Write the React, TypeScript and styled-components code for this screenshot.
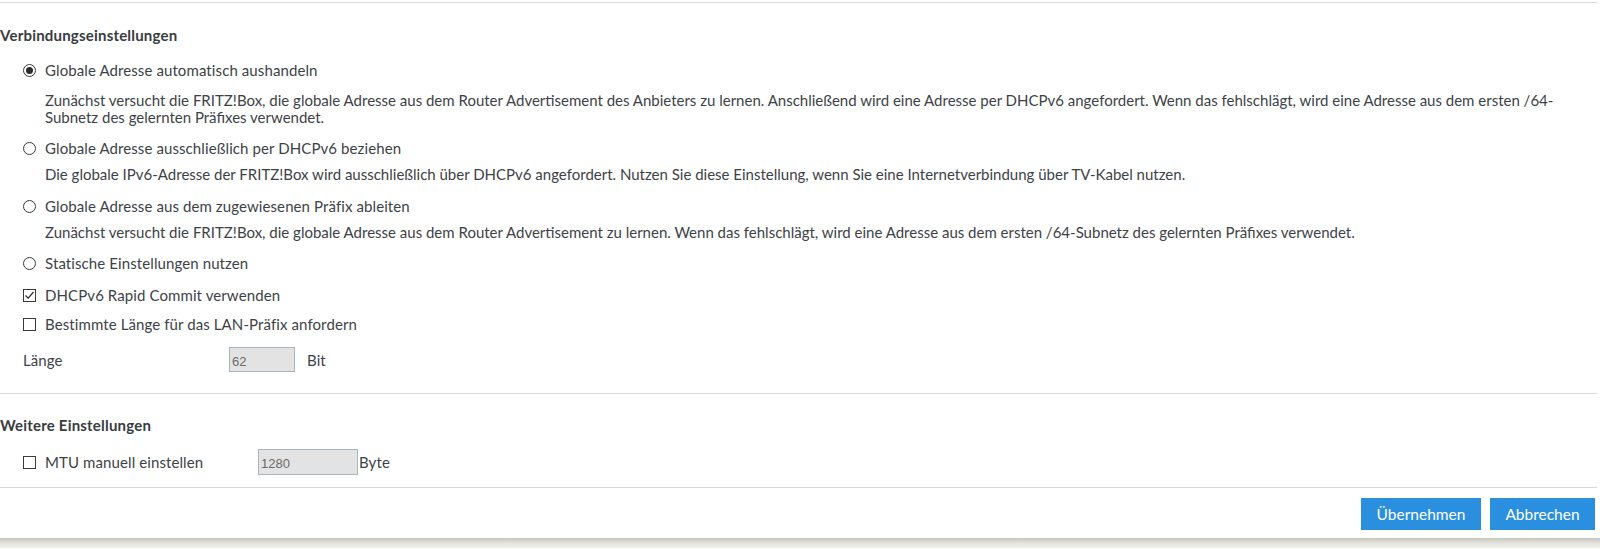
import React from "react";
import styled, { createGlobalStyle } from "styled-components";

const Global = createGlobalStyle`
  html, body { margin: 0; padding: 0; background: #ffffff; }
  body { font-family: Lato, "Noto Sans", sans-serif; color: #3d4247; }
  * { box-sizing: border-box; }
`;

const Page = styled.div`
  width: 1600px;
  padding-top: 2px;
`;

const Panel = styled.div`
  width: 1597px;
  background: #fff;
  border-top: 1px solid #dadada;
`;

const Section = styled.section<{ $top: number }>`
  padding: ${(p) => p.$top}px 20px 0 0;
  display: flex;
  flex-direction: column;
`;

const Heading = styled.h2`
  margin: 0;
  font-size: 15px;
  line-height: 20px;
  font-weight: 700;
  letter-spacing: 0.2px;
  color: #383c41;
`;

const Row = styled.label<{ $mt: number }>`
  display: flex;
  align-items: center;
  margin-top: ${(p) => p.$mt}px;
  padding-left: 23px;
  font-size: 15px;
  line-height: 20px;
  height: 20px;
  letter-spacing: 0.1px;
`;

const Desc = styled.p<{ $mt: number }>`
  margin: ${(p) => p.$mt}px 0 0 45px;
  font-size: 15px;
  line-height: 17px;
`;

const RadioMark = styled.span<{ $on?: boolean }>`
  width: 13px;
  height: 13px;
  border: 1px solid #3a3a3a;
  border-radius: 50%;
  display: inline-flex;
  align-items: center;
  justify-content: center;
  margin-right: 9px;
  flex: none;
  &::after {
    content: "";
    width: 7px;
    height: 7px;
    border-radius: 50%;
    background: ${(p) => (p.$on ? "#2b2b2b" : "transparent")};
  }
`;

const BoxMark = styled.span`
  width: 13px;
  height: 13px;
  border: 1px solid #3a3a3a;
  display: inline-flex;
  align-items: center;
  justify-content: center;
  margin-right: 9px;
  flex: none;
`;

const FieldRow = styled.div<{ $mt: number; $h: number }>`
  display: flex;
  align-items: center;
  margin-top: ${(p) => p.$mt}px;
  height: ${(p) => p.$h}px;
  padding-left: 23px;
  font-size: 15px;
  letter-spacing: 0.1px;
`;

const FieldLabel = styled.span<{ $w: number }>`
  width: ${(p) => p.$w}px;
  display: inline-flex;
  align-items: center;
  flex: none;
`;

const TextInput = styled.input<{ $w: number; $h: number }>`
  width: ${(p) => p.$w}px;
  height: ${(p) => p.$h}px;
  background: #e3e3e3;
  border: 1px solid #a9b5be;
  padding: 3px 0 0 2px;
  font-family: "Liberation Sans", Arial, sans-serif;
  font-size: 13px;
  color: #6a6a6a;
  outline: none;
  flex: none;
`;

const Unit = styled.span<{ $ml: number }>`
  margin-left: ${(p) => p.$ml}px;
`;

const Separator = styled.hr<{ $mt: number }>`
  border: 0;
  border-top: 1px solid #d9d9d9;
  margin: ${(p) => p.$mt}px 0 0;
  width: 100%;
`;

const Footer = styled.div`
  display: flex;
  justify-content: flex-end;
  gap: 9px;
  padding: 10px 2px 8px 0;
`;

const Button = styled.button<{ $w: number }>`
  width: ${(p) => p.$w}px;
  height: 32px;
  border: 0;
  background: #2a8fde;
  color: #fff;
  font-family: Lato, "Noto Sans", sans-serif;
  font-size: 15.5px;
  cursor: pointer;
`;

const Shadow = styled.div`
  height: 10px;
  background: linear-gradient(#c4c4bc, #e4e3dd 50%, #efeee9);
`;

const Check = () => (
  <svg width="11" height="11" viewBox="0 0 11 11">
    <polyline points="1.5,5.5 4.2,8.2 9.5,2" fill="none" stroke="#2b2b2b" strokeWidth="1.2" />
  </svg>
);

export default function App() {
  return (
    <Page>
      <Global />
      <Panel>
        <Section $top={22}>
          <Heading>Verbindungseinstellungen</Heading>
          <Row $mt={15}>
            <RadioMark $on />
            Globale Adresse automatisch aushandeln
          </Row>
          <Desc $mt={12}>
            Zunächst versucht die FRITZ!Box, die globale Adresse aus dem Router Advertisement des Anbieters zu lernen. Anschließend wird eine Adresse per DHCPv6 angefordert. Wenn das fehlschlägt, wird eine Adresse aus dem ersten /64-Subnetz des gelernten Präfixes verwendet.
          </Desc>
          <Row $mt={12}>
            <RadioMark />
            Globale Adresse ausschließlich per DHCPv6 beziehen
          </Row>
          <Desc $mt={8}>
            Die globale IPv6-Adresse der FRITZ!Box wird ausschließlich über DHCPv6 angefordert. Nutzen Sie diese Einstellung, wenn Sie eine Internetverbindung über TV-Kabel nutzen.
          </Desc>
          <Row $mt={13}>
            <RadioMark />
            Globale Adresse aus dem zugewiesenen Präfix ableiten
          </Row>
          <Desc $mt={8}>
            Zunächst versucht die FRITZ!Box, die globale Adresse aus dem Router Advertisement zu lernen. Wenn das fehlschlägt, wird eine Adresse aus dem ersten /64-Subnetz des gelernten Präfixes verwendet.
          </Desc>
          <Row $mt={12}>
            <RadioMark />
            Statische Einstellungen nutzen
          </Row>
          <Row $mt={12}>
            <BoxMark>
              <Check />
            </BoxMark>
            DHCPv6 Rapid Commit verwenden
          </Row>
          <Row $mt={9}>
            <BoxMark />
            Bestimmte Länge für das LAN-Präfix anfordern
          </Row>
          <FieldRow $mt={13} $h={25}>
            <FieldLabel $w={206}>Länge</FieldLabel>
            <TextInput $w={66} $h={25} readOnly value="62" />
            <Unit $ml={12}>Bit</Unit>
          </FieldRow>
        </Section>
        <Separator $mt={21} />
        <Section $top={21}>
          <Heading>Weitere Einstellungen</Heading>
          <FieldRow $mt={14} $h={26}>
            <FieldLabel $w={235}>
              <BoxMark />
              MTU manuell einstellen
            </FieldLabel>
            <TextInput $w={100} $h={26} readOnly value="1280" />
            <Unit $ml={1}>Byte</Unit>
          </FieldRow>
        </Section>
        <Separator $mt={12} />
        <Footer>
          <Button $w={120}>Übernehmen</Button>
          <Button $w={105}>Abbrechen</Button>
        </Footer>
      </Panel>
      <Shadow />
    </Page>
  );
}
